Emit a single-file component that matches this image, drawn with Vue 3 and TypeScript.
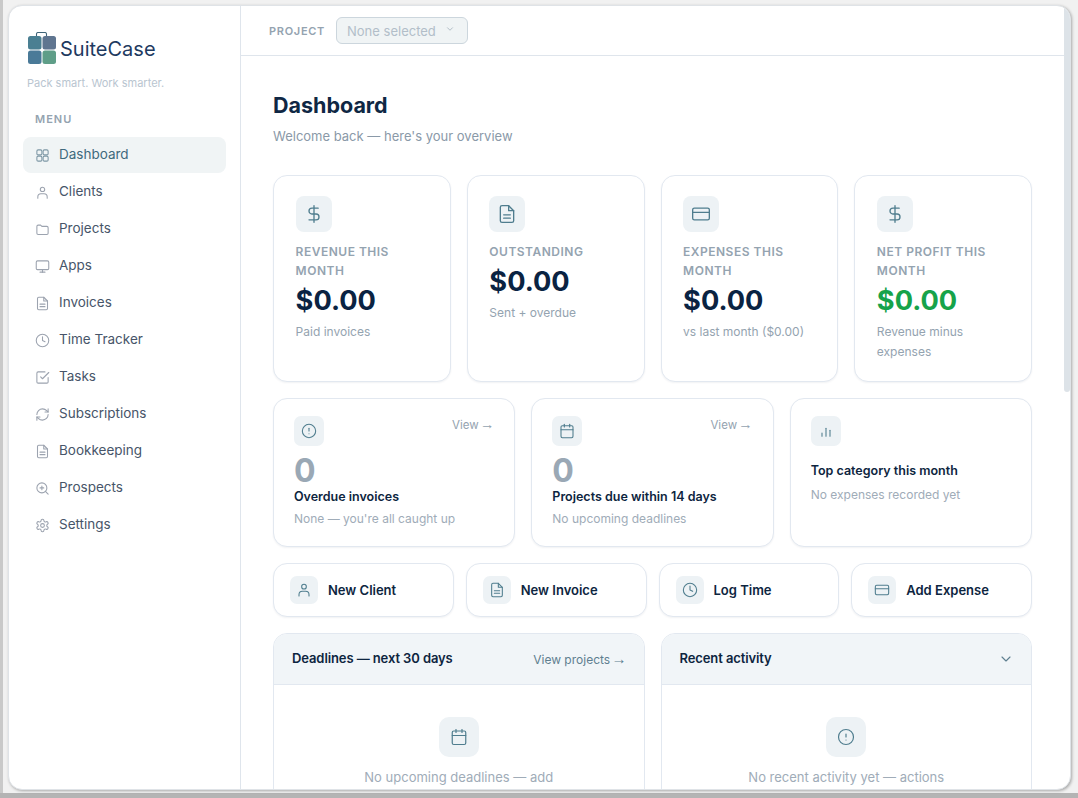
<script setup lang="ts">
const icons: Record<string, string[]> = {
  grid: [
    'M5 3h4a2 2 0 0 1 2 2v4a2 2 0 0 1-2 2H5a2 2 0 0 1-2-2V5a2 2 0 0 1 2-2z',
    'M15 3h4a2 2 0 0 1 2 2v4a2 2 0 0 1-2 2h-4a2 2 0 0 1-2-2V5a2 2 0 0 1 2-2z',
    'M5 13h4a2 2 0 0 1 2 2v4a2 2 0 0 1-2 2H5a2 2 0 0 1-2-2v-4a2 2 0 0 1 2-2z',
    'M15 13h4a2 2 0 0 1 2 2v4a2 2 0 0 1-2 2h-4a2 2 0 0 1-2-2v-4a2 2 0 0 1 2-2z',
  ],
  user: ['M12 3.500a3.500 3.500 0 1 0 0 7 3.500 3.500 0 0 0 0-7z', 'M4.500 21v-2a5 5 0 0 1 5-5h5a5 5 0 0 1 5 5v2'],
  folder: ['M3 7a2 2 0 0 1 2-2h4l2 2h8a2 2 0 0 1 2 2v9a2 2 0 0 1-2 2H5a2 2 0 0 1-2-2z'],
  monitor: ['M4 3h16a2 2 0 0 1 2 2v10a2 2 0 0 1-2 2H4a2 2 0 0 1-2-2V5a2 2 0 0 1 2-2z', 'M12 17v4', 'M8 21h8'],
  file: ['M14 2H6a2 2 0 0 0-2 2v16a2 2 0 0 0 2 2h12a2 2 0 0 0 2-2V8z', 'M14 2v6h6', 'M8 13h8', 'M8 17h8'],
  clock: ['M12 2a10 10 0 1 0 0 20 10 10 0 0 0 0-20z', 'M12 6v6l4 2'],
  check: ['M21 12v7a2 2 0 0 1-2 2H5a2 2 0 0 1-2-2V5a2 2 0 0 1 2-2h11', 'M9 11l3 3L22 4'],
  refresh: [
    'M3 12a9 9 0 0 1 9-9 9.750 9.750 0 0 1 6.740 2.740L21 8',
    'M21 3v5h-5',
    'M21 12a9 9 0 0 1-9 9 9.750 9.750 0 0 1-6.740-2.740L3 16',
    'M8 16H3v5',
  ],
  search: ['M11 3a8 8 0 1 0 0 16 8 8 0 0 0 0-16z', 'M21 21l-4.300-4.300', 'M11 8v6', 'M8 11h6'],
  gear: [
    'M12.220 2h-.440a2 2 0 0 0-2 2v.180a2 2 0 0 1-1 1.730l-.430.250a2 2 0 0 1-2 0l-.150-.080a2 2 0 0 0-2.730.730l-.220.380a2 2 0 0 0 .730 2.730l.150.100a2 2 0 0 1 1 1.720v.510a2 2 0 0 1-1 1.740l-.150.090a2 2 0 0 0-.730 2.730l.220.380a2 2 0 0 0 2.730.730l.150-.080a2 2 0 0 1 2 0l.430.250a2 2 0 0 1 1 1.730V20a2 2 0 0 0 2 2h.440a2 2 0 0 0 2-2v-.180a2 2 0 0 1 1-1.730l.430-.250a2 2 0 0 1 2 0l.150.080a2 2 0 0 0 2.730-.730l.220-.390a2 2 0 0 0-.730-2.730l-.150-.080a2 2 0 0 1-1-1.740v-.500a2 2 0 0 1 1-1.740l.150-.090a2 2 0 0 0 .730-2.730l-.220-.380a2 2 0 0 0-2.730-.730l-.150.080a2 2 0 0 1-2 0l-.430-.250a2 2 0 0 1-1-1.730V4a2 2 0 0 0-2-2z',
    'M12 9a3 3 0 1 0 0 6 3 3 0 0 0 0-6z',
  ],
  dollar: ['M12 2v20', 'M17 5H9.500a3.500 3.500 0 0 0 0 7h5a3.500 3.500 0 0 1 0 7H6'],
  card: ['M4 5h16a2 2 0 0 1 2 2v10a2 2 0 0 1-2 2H4a2 2 0 0 1-2-2V7a2 2 0 0 1 2-2z', 'M2 10h20'],
  alert: ['M12 2a10 10 0 1 0 0 20 10 10 0 0 0 0-20z', 'M12 8v4', 'M12 16h.010'],
  calendar: ['M5 4h14a2 2 0 0 1 2 2v14a2 2 0 0 1-2 2H5a2 2 0 0 1-2-2V6a2 2 0 0 1 2-2z', 'M8 2v4', 'M16 2v4', 'M3 10h18'],
  bars: ['M6 20v-5', 'M12 20V8', 'M18 20v-9'],
  chevron: ['M6 9l6 6 6-6'],
}

const menu = [
  { label: 'Dashboard', icon: 'grid', active: true },
  { label: 'Clients', icon: 'user' },
  { label: 'Projects', icon: 'folder' },
  { label: 'Apps', icon: 'monitor' },
  { label: 'Invoices', icon: 'file' },
  { label: 'Time Tracker', icon: 'clock' },
  { label: 'Tasks', icon: 'check' },
  { label: 'Subscriptions', icon: 'refresh' },
  { label: 'Bookkeeping', icon: 'file' },
  { label: 'Prospects', icon: 'search' },
  { label: 'Settings', icon: 'gear' },
]

const stats = [
  { label: 'Revenue this month', value: '$0.00', sub: 'Paid invoices', icon: 'dollar' },
  { label: 'Outstanding', value: '$0.00', sub: 'Sent + overdue', icon: 'file' },
  { label: 'Expenses this month', value: '$0.00', sub: 'vs last month ($0.00)', icon: 'card' },
  { label: 'Net profit this month', value: '$0.00', sub: 'Revenue minus expenses', icon: 'dollar', good: true },
]

const actions = [
  { label: 'New Client', icon: 'user' },
  { label: 'New Invoice', icon: 'file' },
  { label: 'Log Time', icon: 'clock' },
  { label: 'Add Expense', icon: 'card' },
]
</script>

<template>
  <div class="window">
    <aside class="sidebar">
      <div class="brand">
        <svg class="logo" viewBox="0 0 30 32" aria-hidden="true">
          <path d="M9.500 4V2A1.500 1.500 0 0 1 11 .5h7A1.500 1.500 0 0 1 19.500 2v2" fill="none" stroke="#3f6478" stroke-width="1.100" />
          <rect x="1" y="4" width="13.500" height="13.500" rx="2.500" fill="#4a7f92" />
          <rect x="15.500" y="4" width="13.500" height="13.500" rx="2.500" fill="#5f7590" />
          <rect x="1" y="18.500" width="13.500" height="13.500" rx="2.500" fill="#4a7a98" />
          <rect x="15.500" y="18.500" width="13.500" height="13.500" rx="2.500" fill="#5f9e88" />
        </svg>
        <span class="brand-name">SuiteCase</span>
      </div>
      <p class="tagline">Pack smart. Work smarter.</p>
      <p class="menu-title">MENU</p>
      <nav class="menu">
        <a v-for="item in menu" :key="item.label" class="menu-item" :class="{ active: item.active }">
          <svg class="menu-icon" viewBox="0 0 24 24"><path v-for="d in icons[item.icon]" :key="d" :d="d" /></svg>
          {{ item.label }}
        </a>
      </nav>
    </aside>

    <div class="right">
      <header class="topbar">
        <span class="project-label">PROJECT</span>
        <div class="project-select">
          None selected
          <svg viewBox="0 0 24 24"><path :d="icons.chevron[0]" /></svg>
        </div>
      </header>

      <main class="content">
        <h1>Dashboard</h1>
        <p class="welcome">Welcome back — here's your overview</p>

        <section class="stats">
          <div v-for="s in stats" :key="s.label" class="card stat">
            <span class="tile tile-36">
              <svg viewBox="0 0 24 24"><path v-for="d in icons[s.icon]" :key="d" :d="d" /></svg>
            </span>
            <div class="stat-label">{{ s.label }}</div>
            <div class="stat-value" :class="{ good: s.good }">{{ s.value }}</div>
            <div class="stat-sub">{{ s.sub }}</div>
          </div>
        </section>

        <section class="summary">
          <div class="card mini">
            <div class="mini-top">
              <span class="tile tile-30">
                <svg viewBox="0 0 24 24"><path v-for="d in icons.alert" :key="d" :d="d" /></svg>
              </span>
              <a class="view">View <span class="arrow">→</span></a>
            </div>
            <div class="count">0</div>
            <div class="mini-title">Overdue invoices</div>
            <div class="mini-sub">None — you're all caught up</div>
          </div>
          <div class="card mini">
            <div class="mini-top">
              <span class="tile tile-30">
                <svg viewBox="0 0 24 24"><path v-for="d in icons.calendar" :key="d" :d="d" /></svg>
              </span>
              <a class="view">View <span class="arrow">→</span></a>
            </div>
            <div class="count">0</div>
            <div class="mini-title">Projects due within 14 days</div>
            <div class="mini-sub">No upcoming deadlines</div>
          </div>
          <div class="card mini">
            <div class="mini-top">
              <span class="tile tile-30">
                <svg viewBox="0 0 24 24"><path v-for="d in icons.bars" :key="d" :d="d" /></svg>
              </span>
            </div>
            <div class="mini-title top-cat">Top category this month</div>
            <div class="mini-sub top-cat-sub">No expenses recorded yet</div>
          </div>
        </section>

        <section class="actions">
          <a v-for="a in actions" :key="a.label" class="card action">
            <span class="tile tile-28">
              <svg viewBox="0 0 24 24"><path v-for="d in icons[a.icon]" :key="d" :d="d" /></svg>
            </span>
            {{ a.label }}
          </a>
        </section>

        <section class="panels">
          <div class="panel">
            <div class="panel-head">
              <span class="panel-title">Deadlines — next 30 days</span>
              <a class="panel-link">View projects <span class="arrow">→</span></a>
            </div>
            <div class="panel-empty">
              <span class="tile tile-40">
                <svg viewBox="0 0 24 24"><path v-for="d in icons.calendar" :key="d" :d="d" /></svg>
              </span>
              <p>No upcoming deadlines — add</p>
            </div>
          </div>
          <div class="panel">
            <div class="panel-head">
              <span class="panel-title">Recent activity</span>
              <svg class="panel-chevron" viewBox="0 0 24 24"><path :d="icons.chevron[0]" /></svg>
            </div>
            <div class="panel-empty">
              <span class="tile tile-40">
                <svg viewBox="0 0 24 24"><path v-for="d in icons.alert" :key="d" :d="d" /></svg>
              </span>
              <p>No recent activity yet — actions</p>
            </div>
          </div>
        </section>
      </main>

      <div class="scroll-thumb"></div>
    </div>
  </div>
</template>

<style>
html,
body {
  margin: 0;
  height: 100%;
  overflow: hidden;
  background:
    linear-gradient(#b4b4b4, #b4b4b4) left bottom / 100% 5px no-repeat,
    linear-gradient(#c9c9c9, #c9c9c9) left top / 3px 100% no-repeat,
    #f1f1f1;
}
</style>

<style scoped>
.window {
  box-sizing: border-box;
  display: flex;
  width: 1063px;
  height: 785px;
  margin: 5px 0 0 8px;
  background: #fff;
  border: 1px solid #dfe3e7;
  border-radius: 14px;
  overflow: hidden;
  box-shadow: 1px 1px 3px rgba(0, 0, 0, 0.3);
  font-family: Inter, "Liberation Sans", sans-serif;
  color: #0f2744;
}

.sidebar {
  box-sizing: border-box;
  flex: 0 0 232px;
  padding: 25px 14px 0;
  border-right: 1px solid #dfe5ec;
}

.brand {
  display: flex;
  align-items: center;
  gap: 3px;
  padding-left: 4px;
}

.logo {
  width: 30px;
  height: 32px;
}

.brand-name {
  font-size: 20px;
  line-height: 32px;
  margin-top: 2px;
  color: #1e3a5f;
}

.tagline {
  margin: 10px 0 0 4px;
  font-size: 11px;
  line-height: 16px;
  color: #b9c5d0;
}

.menu-title {
  margin: 20px 0 0 12px;
  font-size: 11px;
  font-weight: 600;
  line-height: 16px;
  letter-spacing: 1px;
  color: #94a3b0;
}

.menu {
  display: flex;
  flex-direction: column;
  gap: 1px;
  margin-top: 10px;
}

.menu-item {
  box-sizing: border-box;
  display: flex;
  align-items: center;
  gap: 9px;
  height: 36px;
  padding: 0 12px 2px;
  border-radius: 8px;
  font-size: 13.500px;
  color: #475569;
}

.menu-item.active {
  background: #f0f4f5;
  color: #3f6a7d;
}

.menu-icon {
  width: 15px;
  height: 15px;
  margin-top: 2px;
  fill: none;
  stroke: #9ca3af;
  stroke-width: 1.700;
  stroke-linecap: round;
  stroke-linejoin: round;
}

.active .menu-icon {
  stroke: #7d97a5;
}

.right {
  position: relative;
  flex: 1;
  min-width: 0;
  padding-right: 6px;
  overflow: hidden;
}

/* the page scrolls here, thumb only since the screenshot is at the top */
.scroll-thumb {
  position: absolute;
  top: 0;
  right: 0;
  width: 6px;
  height: 386px;
  background: #dde3e8;
  border-radius: 3px;
}

.topbar {
  box-sizing: border-box;
  display: flex;
  align-items: center;
  gap: 11px;
  height: 50px;
  padding: 0 28px;
  border-bottom: 1px solid #dfe5ec;
}

.project-label {
  font-size: 11px;
  font-weight: 600;
  letter-spacing: 0.700px;
  color: #94a3b0;
}

.project-select {
  box-sizing: border-box;
  display: flex;
  align-items: center;
  gap: 9px;
  width: 132px;
  height: 27px;
  padding: 0 10px;
  background: #f0f4f5;
  border: 1px solid #ccd6dd;
  border-radius: 6px;
  font-size: 13px;
  white-space: nowrap;
  color: #b2bec9;
}

.project-select svg {
  width: 10px;
  height: 10px;
  margin-top: -3px;
  fill: none;
  stroke: #a6b3be;
  stroke-width: 2;
  stroke-linecap: round;
  stroke-linejoin: round;
}

.content {
  box-sizing: border-box;
  padding: 33px 32px 32px;
}

h1 {
  margin: 0;
  font-size: 21.500px;
  font-weight: 700;
  line-height: 32px;
  color: #0f2744;
}

.welcome {
  margin: 5px 0 0;
  font-size: 13px;
  line-height: 20px;
  color: #8a99a8;
}

.card {
  box-sizing: border-box;
  background: #fff;
  border: 1px solid #e2e8f0;
  border-radius: 14px;
  box-shadow: 0 1px 2px rgba(15, 39, 68, 0.06);
}

.tile {
  display: flex;
  align-items: center;
  justify-content: center;
  flex: none;
  background: #edf2f5;
}

.tile svg {
  fill: none;
  stroke: #4f7d8e;
  stroke-width: 1.600;
  stroke-linecap: round;
  stroke-linejoin: round;
}

.tile-36 {
  width: 36px;
  height: 36px;
  border-radius: 8px;
}

.tile-36 svg {
  width: 20px;
  height: 20px;
}

.tile-30 {
  width: 30px;
  height: 30px;
  border-radius: 7px;
}

.tile-30 svg {
  width: 16px;
  height: 16px;
}

.tile-28 {
  width: 28px;
  height: 28px;
  border-radius: 7px;
}

.tile-28 svg {
  width: 16px;
  height: 16px;
}

.tile-40 {
  width: 40px;
  height: 40px;
  border-radius: 10px;
}

.tile-40 svg {
  width: 18px;
  height: 18px;
}

.stats {
  display: grid;
  grid-template-columns: repeat(4, 1fr);
  gap: 16px;
  margin-top: 29px;
}

.stat {
  height: 207px;
  padding: 20px 21.600px;
}

.stat-label {
  margin-top: 10px;
  font-size: 12px;
  font-weight: 600;
  line-height: 19px;
  letter-spacing: 0.500px;
  text-transform: uppercase;
  color: #94a3b0;
}

.stat-value {
  margin-top: 4px;
  font-size: 27.200px;
  font-weight: 700;
  line-height: 34px;
  color: #0a2342;
}

.stat-value.good {
  color: #16a34a;
}

.stat-sub {
  margin-top: 4px;
  font-size: 12px;
  line-height: 20px;
  color: #94a3b0;
}

.summary {
  display: grid;
  grid-template-columns: repeat(3, 1fr);
  gap: 16px;
  margin-top: 16px;
}

.mini {
  height: 149px;
  padding: 17px 20px 16px;
}

.mini-top {
  display: flex;
  align-items: flex-start;
  justify-content: space-between;
}

.view {
  margin-top: -1px;
  font-size: 11.500px;
  line-height: 20px;
  color: #94a3b0;
}

.arrow {
  margin-left: -2px;
  font-family: "Liberation Sans", sans-serif;
  font-size: 1.250em;
  line-height: 1;
}

.count {
  margin-top: 7px;
  font-size: 32px;
  font-weight: 700;
  line-height: 35px;
  color: #9aa8b5;
}

.mini-title {
  font-size: 12.500px;
  font-weight: 600;
  line-height: 18px;
  color: #0d2540;
}

.mini-title.top-cat {
  margin-top: 16px;
}

.mini-sub {
  margin-top: 3px;
  font-size: 12px;
  line-height: 20px;
  color: #a0acb8;
}

.mini-sub.top-cat-sub {
  margin-top: 5px;
}

.actions {
  display: grid;
  grid-template-columns: repeat(4, 1fr);
  gap: 12px;
  margin-top: 16px;
}

.action {
  display: flex;
  align-items: center;
  gap: 10px;
  height: 54px;
  padding: 0 16px;
  font-size: 13px;
  font-weight: 600;
  color: #0d2540;
}

.panels {
  display: grid;
  grid-template-columns: repeat(2, 1fr);
  gap: 16px;
  margin-top: 16px;
}

.panel {
  background: #fff;
  border: 1px solid #e2e8f0;
  border-radius: 14px;
  overflow: hidden;
}

.panel-head {
  box-sizing: border-box;
  display: flex;
  align-items: center;
  justify-content: space-between;
  height: 51px;
  padding: 0 17px 0 18px;
  background: #f1f5f8;
  border-bottom: 1px solid #e2e8f0;
}

.panel-title {
  margin-bottom: 2px;
  font-size: 13px;
  font-weight: 600;
  letter-spacing: -0.100px;
  color: #0d2540;
}

.panel-link {
  font-size: 12px;
  color: #5f7f90;
}

.panel-chevron {
  width: 16px;
  height: 16px;
  fill: none;
  stroke: #5f7f90;
  stroke-width: 1.700;
  stroke-linecap: round;
  stroke-linejoin: round;
}

.panel-empty {
  display: flex;
  flex-direction: column;
  align-items: center;
  padding: 32px 24px 60px;
}

.panel-empty p {
  margin: 10px 0 0;
  font-size: 13px;
  line-height: 20px;
  text-align: center;
  color: #a0acb8;
}
</style>
